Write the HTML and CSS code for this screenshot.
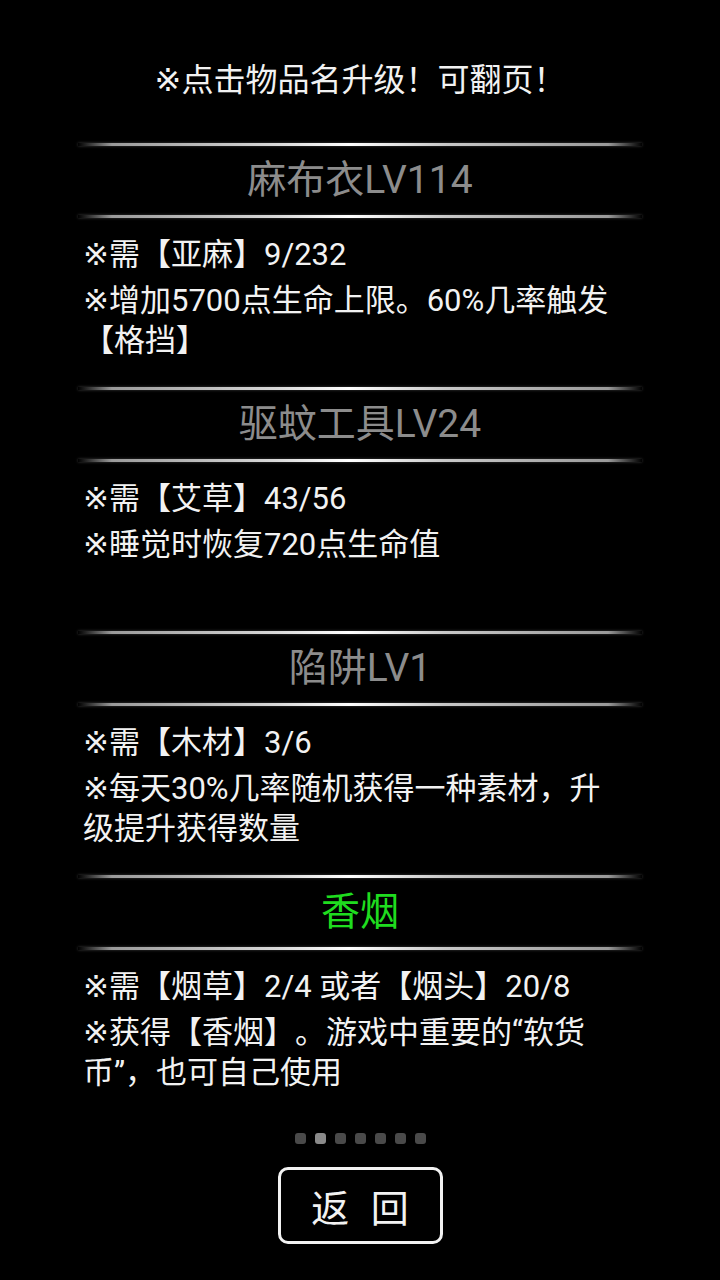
FILE: index.html
```html
<!DOCTYPE html>
<html lang="zh-CN">
<head>
    <meta charset="UTF-8">
    <meta name="viewport" content="width=device-width, initial-scale=1.0">
    <title>物品升级</title>
    <link rel="stylesheet" href="styles.css">
</head>
<body>
    <div class="container">
        <p class="tip">※点击物品名升级！可翻页！</p>

        <div class="item">
            <div class="item-head">麻布衣LV114</div>
            <div class="item-body">
                <p>※需【亚麻】9/232</p>
                <p>※增加5700点生命上限。60%几率触发【格挡】</p>
            </div>
        </div>

        <div class="item">
            <div class="item-head">驱蚊工具LV24</div>
            <div class="item-body">
                <p>※需【艾草】43/56</p>
                <p>※睡觉时恢复720点生命值</p>
            </div>
        </div>

        <div class="item">
            <div class="item-head">陷阱LV1</div>
            <div class="item-body">
                <p>※需【木材】3/6</p>
                <p>※每天30%几率随机获得一种素材，升级提升获得数量</p>
            </div>
        </div>

        <div class="item">
            <div class="item-head new">香烟</div>
            <div class="item-body">
                <p>※需【烟草】2/4 或者【烟头】20/8</p>
                <p>※获得【香烟】。游戏中重要的“软货币”，也可自己使用</p>
            </div>
        </div>

        <div class="pager">
            <span class="dot"></span>
            <span class="dot active"></span>
            <span class="dot"></span>
            <span class="dot"></span>
            <span class="dot"></span>
            <span class="dot"></span>
            <span class="dot"></span>
        </div>

        <button class="back">返 回</button>
    </div>
</body>
</html>
```

FILE: styles.css
```css
* {
    box-sizing: border-box;
}

body {
    margin: 0;
    background: #000;
    color: #f2f2f2;
    font-family: Roboto, "DejaVu Sans", "Noto Sans CJK SC", sans-serif;
    text-spacing-trim: space-all;
}

.container {
    width: 564px;
    margin: 0 auto;
    padding-top: 60px;
    display: flex;
    flex-direction: column;
    align-items: stretch;
}

p {
    margin: 0;
}

.tip {
    text-align: center;
    font-size: 32px;
    line-height: 40px;
    margin-bottom: 44px;
}

/* cabeçalho do item, entre duas linhas brilhantes */
.item-head {
    position: relative;
    height: 72px;
    line-height: 72px;
    text-align: center;
    font-size: 39px;
    color: #8c8c8c;
}

.item-head::before,
.item-head::after {
    content: "";
    position: absolute;
    left: 0;
    right: 0;
    height: 3px;
    background: linear-gradient(to right, rgba(255, 255, 255, 0), #9a9a9a 6%, #d8d8d8 35%, #ffffff 48%, #c8c8c8 65%, #9a9a9a 94%, rgba(255, 255, 255, 0));
    box-shadow: 0 0 3px rgba(255, 255, 255, 0.25);
}

.item-head::before {
    top: -1px;
}

.item-head::after {
    bottom: -2px;
}

.item-head.new {
    color: #1fdc1f;
}

.item-body {
    height: 172px;
    padding: 19px 12px 0 5px;
    font-size: 31px;
    line-height: 40px;
}

.item-body p + p {
    margin-top: 6px;
}

.pager {
    display: flex;
    justify-content: center;
    gap: 9px;
    margin-top: 13px;
}

.dot {
    width: 11px;
    height: 11px;
    border-radius: 3px;
    background: #4a4a4a;
}

.dot.active {
    background: #8a8a8a;
}

.back {
    align-self: center;
    margin-top: 23px;
    width: 165px;
    height: 77px;
    background: #000;
    color: #f2f2f2;
    border: 3px solid #f2f2f2;
    border-radius: 10px;
    font-family: Roboto, "Noto Sans CJK SC", sans-serif;
    font-size: 38px;
    letter-spacing: 6px;
    padding: 0 0 0 6px;
}
```
